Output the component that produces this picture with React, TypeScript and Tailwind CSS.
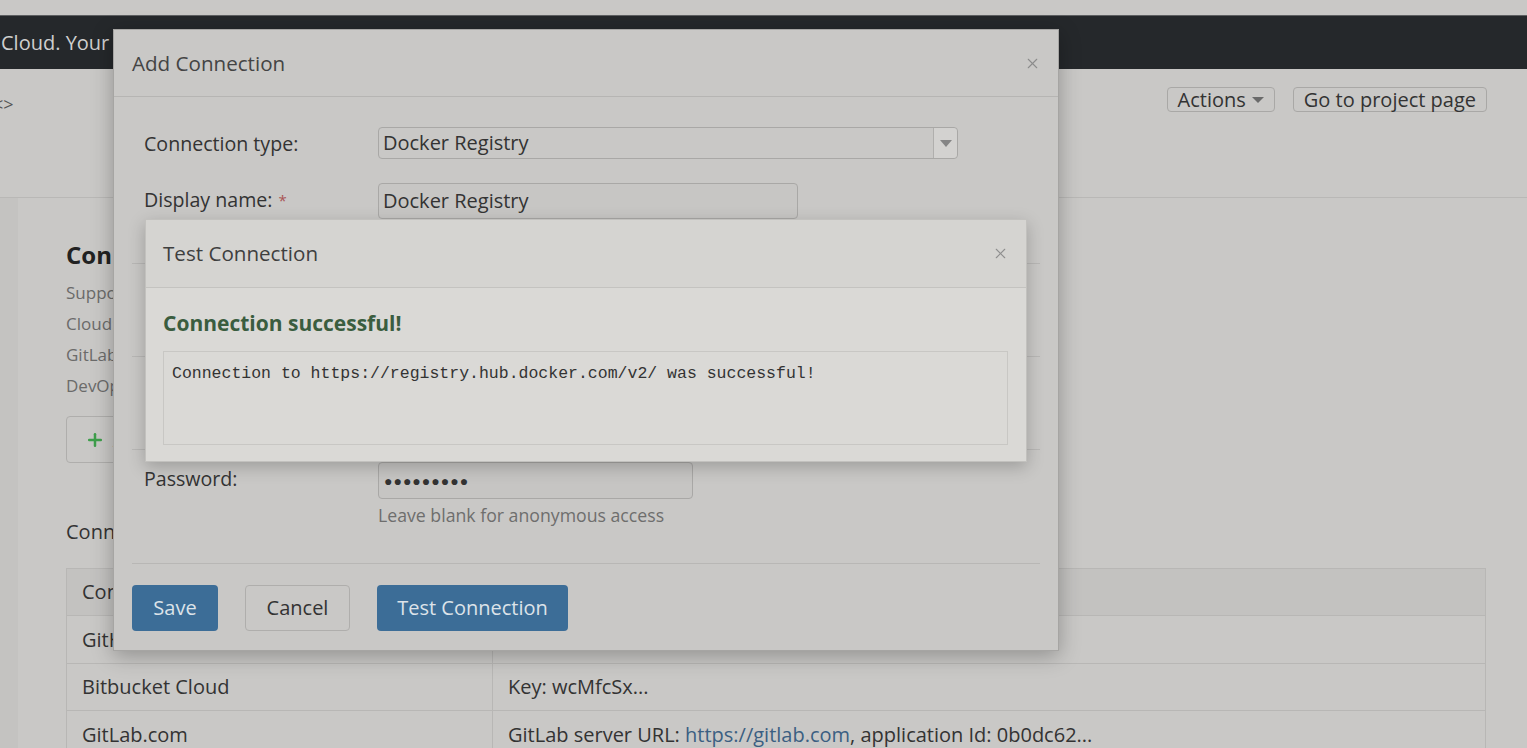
import { Plus, X } from "lucide-react";

const FONT = "font-['Open_Sans','Noto_Sans',sans-serif]";

function FieldRow({ label, required, children }: { label: string; required?: boolean; children: React.ReactNode }) {
  return (
    <div className="grid grid-cols-[234px_1fr] items-start pl-[12px]">
      <div className="mt-[1px] flex h-[32px] items-center text-[19.6px] text-[#333]">
        {label}
        {required && <span className="ml-[6px] text-[15px] text-[#a55]">*</span>}
      </div>
      <div>{children}</div>
    </div>
  );
}

function AddConnectionModal() {
  return (
    <div className="absolute left-[113px] top-[29px] flex h-[622px] w-[946px] flex-col border border-[#a6a5a3] bg-[#c9c8c6] shadow-[0_5px_20px_rgba(0,0,0,0.28)]">
      <div className="flex h-[67px] items-center justify-between border-b border-[#b6b5b3] pl-[18px] pr-[17px]">
        <span className="text-[20.6px] text-[#444]">Add Connection</span>
        <X size={17} strokeWidth={1.5} className="text-[#8c8c8c]" />
      </div>

      <div className="flex flex-1 flex-col px-[18px] pt-[30px]">
        <FieldRow label="Connection type:">
          <div className="flex h-[32px] w-[580px] items-center justify-between rounded-[4px] border border-[#a9a8a6] pl-[4px]">
            <span className="text-[20px] text-[#333]">Docker Registry</span>
            <div className="flex h-full w-[24px] items-center justify-center rounded-r-[4px] border-l border-[#b0afad] bg-[#d3d2d0]">
              <div className="h-0 w-0 border-x-[6px] border-t-[7px] border-x-transparent border-t-[#858585]" />
            </div>
          </div>
        </FieldRow>
        <div className="mt-[23px]">
          <FieldRow label="Display name:" required>
            <div className="flex h-[36px] w-[420px] items-center rounded-[4px] border border-[#a9a8a6] bg-[#c7c6c4] pl-[4px] text-[20px] text-[#333]">
              Docker Registry
            </div>
          </FieldRow>
        </div>
        <div className="mt-[44px] border-t border-[#b8b7b5]" />
        <div className="h-[92px] pt-[14px]">
          <FieldRow label="Registry URL:">
            <div className="h-[36px] w-[580px] rounded-[4px] border border-[#a9a8a6]" />
          </FieldRow>
        </div>
        <div className="border-t border-[#b8b7b5]" />
        <div className="h-[92px] pt-[14px]">
          <FieldRow label="Username:">
            <div className="h-[36px] w-[315px] rounded-[4px] border border-[#a9a8a6]" />
          </FieldRow>
        </div>
        <div className="border-t border-[#b8b7b5]" />
        <div className="pt-[12px]">
          <FieldRow label="Password:">
            <div className="flex h-[37px] w-[315px] items-center rounded-[4px] border border-[#a9a8a6] bg-[#c6c5c3] pl-[5px] text-[14px] tracking-[1px] text-[#333]">
              ●●●●●●●●●
            </div>
            <div className="mt-[3px] text-[17.7px] text-[#6e6e6d]">Leave blank for anonymous access</div>
          </FieldRow>
        </div>
        <div className="mt-[34px] border-t border-[#b8b7b5]" />
        <div className="flex gap-[27px] pt-[21px]">
          <button className="h-[46px] w-[86px] rounded-[4px] bg-[#3c6d97] text-[20px] text-[#dde3e9]">Save</button>
          <button className="h-[46px] w-[105px] rounded-[4px] border border-[#afaeac] text-[20px] text-[#333]">Cancel</button>
          <button className="h-[46px] w-[191px] rounded-[4px] bg-[#3c6d97] text-[20px] text-[#dde3e9]">Test Connection</button>
        </div>
      </div>
    </div>
  );
}

function TestConnectionModal() {
  return (
    <div className="absolute left-[145px] top-[219px] h-[243px] w-[882px] border border-[#c2c1be] bg-[#dad9d6] shadow-[0_5px_16px_rgba(0,0,0,0.22)]">
      <div className="flex h-[68px] items-center justify-between border-b border-[#c4c3c0] bg-[#d5d4d1] pl-[17px] pr-[17px]">
        <span className="text-[20.6px] text-[#3f3f3f]">Test Connection</span>
        <X size={17} strokeWidth={1.5} className="text-[#8e8e8e]" />
      </div>
      <div className="px-[17px] pt-[21px]">
        <div className="text-[21px] font-bold leading-[28px] text-[#3a5d3f]">Connection successful!</div>
        <div className="mt-[14px] h-[94px] w-[845px] border border-[#c8c7c4] px-[8px] pt-[10px] font-['Liberation_Mono',monospace] text-[16.5px] text-[#333]">
          Connection to https://registry.hub.docker.com/v2/ was successful!
        </div>
      </div>
    </div>
  );
}

export default function App() {
  return (
    <div className={`${FONT} relative h-[748px] w-full overflow-hidden bg-[#c9c8c6]`}>
      <div className="h-[15px]" />
      <div className="flex h-[54px] items-center border-t border-[#5d5f61] bg-[#25282b]">
        <span className="pl-[1px] text-[20px] text-[#cfcfcf]">Cloud. Your organization's home for builds</span>
      </div>

      <div className="flex h-[129px] items-start justify-between border-b border-[#b9b8b6] pr-[40px]">
        <span className="-ml-[7px] pt-[22px] text-[18px] text-[#555]">&lt;&gt;</span>
        <div className="flex gap-[18px] pt-[18px]">
          <button className="flex h-[25px] items-center gap-[6px] rounded-[4px] border border-[#a9a8a6] px-[10px] text-[20px] text-[#333]">
            Actions
            <span className="h-0 w-0 border-x-[6px] border-t-[6px] border-x-transparent border-t-[#6a6a6a]" />
          </button>
          <button className="flex h-[25px] items-center rounded-[4px] border border-[#a9a8a6] px-[10px] text-[20px] text-[#333]">
            Go to project page
          </button>
        </div>
      </div>

      <div className="flex bg-[#c4c3c1] pl-[18px]">
        <div className="flex-1 bg-[#c9c8c6] pl-[48px] pr-[41px] pt-[41px]">
          <h2 className="text-[24px] font-bold leading-[32px] text-[#222]">Connections</h2>
          <div className="mt-[6px] text-[17px] leading-[31px] text-[#6b6b6a]">
            <div>Supported connection providers for this project:</div>
            <div>Cloud: GitHub.com, Bitbucket Cloud, Azure</div>
            <div>GitLab: GitLab.com and self-hosted instances</div>
            <div>DevOps: Azure DevOps Services and Server</div>
          </div>
          <button className="mt-[15px] flex h-[47px] items-center gap-[8px] rounded-[4px] border border-[#afaeac] pl-[18px] pr-[18px] text-[20px] text-[#333]">
            <Plus size={20} strokeWidth={3} className="text-[#3e9e4b]" />
            Add Connection
          </button>
          <div className="mt-[54px] text-[20px] text-[#333]">Connections</div>
          <table className="mt-[21px] w-full border-collapse text-left text-[20px] text-[#333]">
            <thead>
              <tr className="h-[47px] bg-[#c3c2c0]">
                <th className="w-[426px] border border-[#b8b7b5] pl-[15px] font-normal">Connection</th>
                <th className="border border-[#b8b7b5] pl-[15px] font-normal">Settings</th>
              </tr>
            </thead>
            <tbody>
              <tr className="h-[48px]">
                <td className="border border-[#b8b7b5] pl-[15px]">GitHub.com</td>
                <td className="border border-[#b8b7b5] pl-[15px]">Client ID: Iv1.8a61...</td>
              </tr>
              <tr className="h-[47px]">
                <td className="border border-[#b8b7b5] pl-[15px]">Bitbucket Cloud</td>
                <td className="border border-[#b8b7b5] pl-[15px]">Key: wcMfcSx...</td>
              </tr>
              <tr className="h-[48px]">
                <td className="border border-[#b8b7b5] pl-[15px]">GitLab.com</td>
                <td className="border border-[#b8b7b5] pl-[15px]">
                  GitLab server URL: <span className="text-[#3b5f82]">https://gitlab.com</span>, application Id: 0b0dc62...
                </td>
              </tr>
            </tbody>
          </table>
        </div>
      </div>

      <AddConnectionModal />
      <TestConnectionModal />
    </div>
  );
}
